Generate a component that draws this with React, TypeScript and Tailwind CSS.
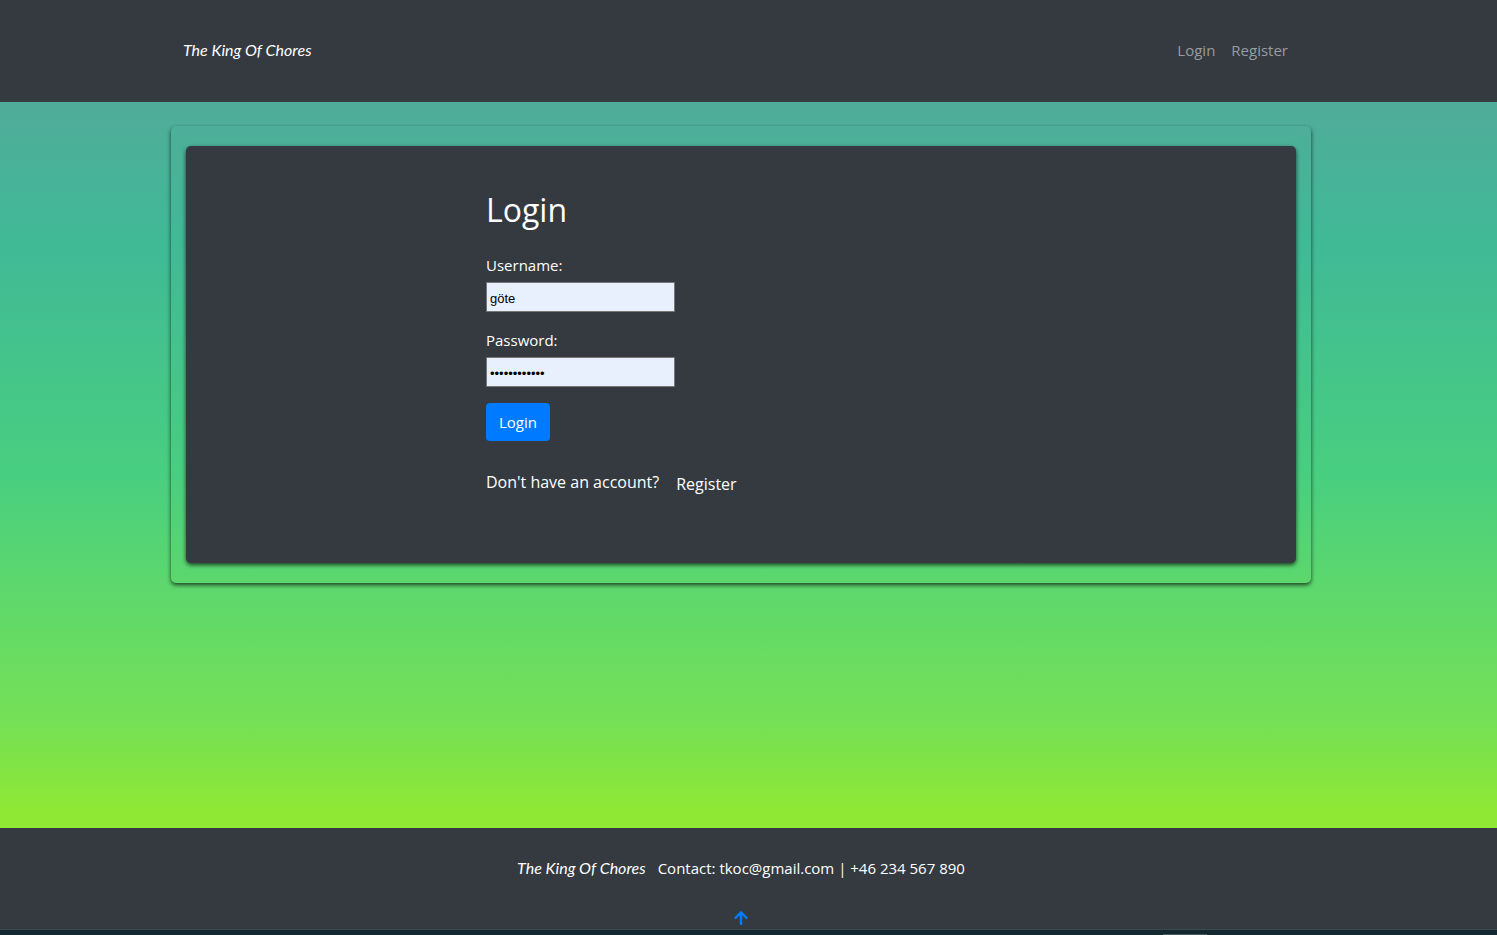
import React from "react";

function Brand() {
  return (
    <a
      href="#home"
      className="whitespace-nowrap font-['Lato','Liberation_Sans',sans-serif] text-base leading-8 italic text-white"
    >
      The King Of Chores
    </a>
  );
}

type FieldProps = {
  id: string;
  label: string;
  type: string;
  value: string;
};

function Field({ id, label, type, value }: FieldProps) {
  return (
    <div className="mb-4 flex flex-col items-start">
      <label htmlFor={id} className="mb-[5px] text-[15px] leading-6">
        {label}
      </label>
      <input
        id={id}
        type={type}
        defaultValue={value}
        className="h-[30px] w-[189px] max-w-full rounded-[1px] border border-[#767676] bg-[#e8f0fe] px-[3px] pt-[3px] font-['Liberation_Sans',Arial,sans-serif] text-[13px] text-black"
      />
    </div>
  );
}

function UpArrow() {
  return (
    <svg viewBox="0 0 448 512" className="h-4 w-[14px]" fill="currentColor" aria-hidden="true">
      <path d="M34.9 289.5l-22.2-22.2c-9.4-9.4-9.4-24.6 0-33.9L207 39c9.4-9.4 24.6-9.4 33.9 0l194.3 194.3c9.4 9.4 9.4 24.6 0 33.9L413 289.4c-9.5 9.5-25 9.3-34.3-.4L264 168.6V456c0 13.3-10.7 24-24 24h-32c-13.3 0-24-10.7-24-24V168.6L69.2 289.1c-9.3 9.8-24.8 10-34.3.4z" />
    </svg>
  );
}

export default function App() {
  return (
    <div className="flex min-h-screen flex-col bg-[#343a40] font-['Open_Sans','Noto_Sans',sans-serif] text-base text-white">
      <header className="pt-[34px] pr-[15px] pb-9">
        <nav className="mx-auto flex max-w-[1140px] items-center justify-between px-3">
          <Brand />
          <div className="flex pr-[3px] text-[15px] leading-6 text-[#999c9f]">
            <a href="#login" className="px-2">
              Login
            </a>
            <a href="#register" className="px-2">
              Register
            </a>
          </div>
        </nav>
      </header>

      <main className="flex-1 bg-[linear-gradient(to_bottom,#50ac9a_0%,#40b996_19%,#48ce80_51%,#60d96a_69%,#74e056_85%,#8fe833_98%)] pt-6 pr-[15px]">
        <div className="mx-auto max-w-[1140px] rounded-[5px] px-[15px] py-5 shadow-[0_2px_4px_rgba(0,0,0,0.7)]">
          <section className="flex justify-center rounded-[5px] bg-[#343a40] px-4 pt-10 pb-[67px] shadow-[0_2px_4px_rgba(0,0,0,0.7)]">
            <div className="w-[510px] max-w-full">
              <h1 className="mb-[19px] text-[32px] leading-[48px]">Login</h1>
              <form onSubmit={(event) => event.preventDefault()}>
                <Field id="username" label="Username:" type="text" value="göte" />
                <Field id="password" label="Password:" type="password" value="hemligtchore" />
                <button type="submit" className="rounded-[4px] bg-[#007bff] px-[13px] py-[7px] text-[15px] leading-6">
                  Login
                </button>
              </form>
              <p className="mt-[27px] flex items-center gap-[17px]">
                <span>Don't have an account?</span>
                <a href="#register" className="pt-1">
                  Register
                </a>
              </p>
            </div>
          </section>
        </div>
      </main>

      <footer>
        <div className="pt-6 pr-[15px] pb-[3px]">
          <div className="flex flex-wrap items-center justify-center gap-x-3">
            <Brand />
            <p className="text-[15px] leading-6">Contact: tkoc@gmail.com | +46 234 567 890</p>
          </div>
          <div className="flex justify-center pt-[26px]">
            <a href="#top" aria-label="Back to top" className="text-[#007bff]">
              <UpArrow />
            </a>
          </div>
        </div>
        <div className="flex h-[6px] items-end justify-end border-t border-[#3c4a50] bg-[#14282f] pr-[290px]">
          <div className="h-px w-11 bg-[#4a5a5c]" />
        </div>
      </footer>
    </div>
  );
}
